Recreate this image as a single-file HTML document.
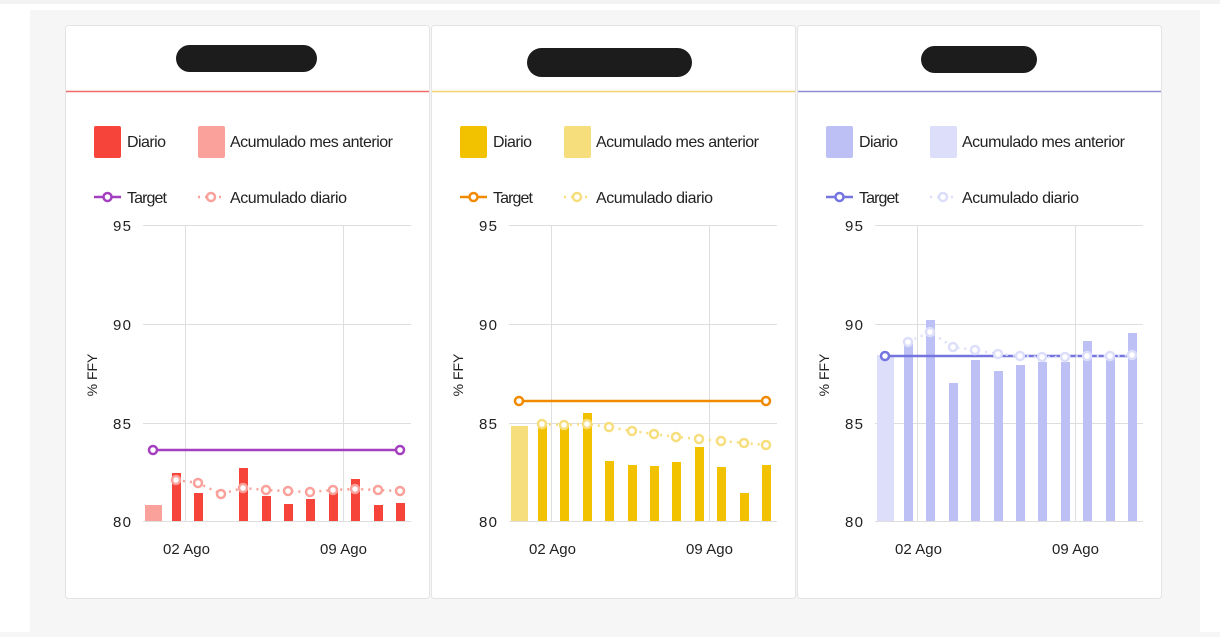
<!DOCTYPE html>
<html><head><meta charset="utf-8"><style>
body{margin:0;width:1220px;height:632px;background:#f6f6f6;font-family:"Liberation Sans",sans-serif;overflow:hidden}
</style></head><body>
<svg width="1220" height="632" xmlns="http://www.w3.org/2000/svg" font-family="Liberation Sans, sans-serif">
<rect x="0" y="0" width="1220" height="632" fill="#ffffff"/>
<rect x="0" y="0" width="1220" height="4" fill="#f3f3f3"/>
<rect x="30" y="10" width="1170" height="622" fill="#f6f6f6"/>
<g stroke="#e4e4e4" fill="#fff">
<rect x="65.5" y="25.5" width="364" height="573" rx="3"/>
<rect x="431.5" y="25.5" width="364" height="573" rx="3"/>
<rect x="797.5" y="25.5" width="364" height="573" rx="3"/>
</g>
<line x1="66" y1="91.5" x2="429" y2="91.5" stroke="#f26b6b" stroke-width="1.5"/>
<line x1="432" y1="91.5" x2="795" y2="91.5" stroke="#f2d46a" stroke-width="1.5"/>
<line x1="798" y1="91.5" x2="1161" y2="91.5" stroke="#8f8fd6" stroke-width="1.5"/>
<rect x="176" y="45" width="141" height="27" rx="13.5" fill="#1c1c1c"/>
<rect x="527" y="48" width="165" height="29" rx="14.5" fill="#1c1c1c"/>
<rect x="921" y="46" width="116" height="27" rx="13.5" fill="#1c1c1c"/>

<defs>
<g id="grid">
<g stroke="#dedede" stroke-width="1">
<line x1="143" y1="225.5" x2="411" y2="225.5"/>
<line x1="143" y1="324.5" x2="411" y2="324.5"/>
<line x1="143" y1="423.5" x2="411" y2="423.5"/>
<line x1="143" y1="521.5" x2="411" y2="521.5"/>
<line x1="185.5" y1="225" x2="185.5" y2="521"/>
<line x1="343.5" y1="225" x2="343.5" y2="521"/>
</g>
<g font-size="15" fill="#222" text-anchor="end">
<text x="131" y="231" textLength="18">95</text><text x="131" y="330" textLength="18">90</text><text x="131" y="429" textLength="18">85</text><text x="131" y="527" textLength="18">80</text>
</g>
<g font-size="15" fill="#222">
<text x="163" y="554" textLength="47">02 Ago</text><text x="320" y="554" textLength="47">09 Ago</text>
</g>
<text transform="translate(97,375) rotate(-90)" font-size="14" fill="#222" text-anchor="middle">% FFY</text>
<g font-size="16" fill="#222">
<text x="127" y="147" textLength="39">Diario</text>
<text x="230" y="147" textLength="163">Acumulado mes anterior</text>
<text x="127" y="203" textLength="40">Target</text>
<text x="230" y="203" textLength="117">Acumulado diario</text>
</g>
</g>
</defs>

<use href="#grid"/>
<use href="#grid" x="366"/>
<use href="#grid" x="732"/>

<!-- Card 1 -->
<rect x="94" y="126" width="27" height="32" rx="2" fill="#f7443a"/>
<rect x="198" y="126" width="27" height="32" rx="2" fill="#f9a19a"/>
<line x1="94" y1="197" x2="121" y2="197" stroke="#a43fc0" stroke-width="2.5"/><circle cx="107.5" cy="197" r="4" fill="#fff" stroke="#a43fc0" stroke-width="2.5"/>
<line x1="198" y1="197" x2="224" y2="197" stroke="#f9a19a" stroke-width="2.5" stroke-dasharray="2,5"/><circle cx="211" cy="197" r="4" fill="#fff" stroke="#f9a19a" stroke-width="2.5"/>
<rect x="145" y="505" width="17" height="16" fill="#f9a19a"/>
<g fill="#f7443a">
<rect x="172" y="473" width="9" height="48"/><rect x="194" y="493" width="9" height="28"/>
<rect x="239" y="468" width="9" height="53"/><rect x="262" y="496" width="9" height="25"/>
<rect x="284" y="504" width="9" height="17"/><rect x="306" y="499" width="9" height="22"/>
<rect x="329" y="491" width="9" height="30"/><rect x="351" y="479" width="9" height="42"/>
<rect x="374" y="505" width="9" height="16"/><rect x="396" y="503" width="9" height="18"/>
</g>
<line x1="153" y1="450" x2="400" y2="450" stroke="#a43fc0" stroke-width="2.5"/>
<circle cx="153" cy="450" r="4" fill="#fff" stroke="#a43fc0" stroke-width="2.5"/><circle cx="400" cy="450" r="4" fill="#fff" stroke="#a43fc0" stroke-width="2.5"/>
<polyline points="176,480 198,483 221,494 243,488 266,490 288,491 310,492 333,490 355,489 378,490 400,491" fill="none" stroke="#f9a19a" stroke-width="2.5" stroke-dasharray="2,5"/>
<g fill="#fff" stroke="#f9a19a" stroke-width="2.5">
<circle cx="176" cy="480" r="4"/><circle cx="198" cy="483" r="4"/><circle cx="221" cy="494" r="4"/><circle cx="243" cy="488" r="4"/><circle cx="266" cy="490" r="4"/><circle cx="288" cy="491" r="4"/><circle cx="310" cy="492" r="4"/><circle cx="333" cy="490" r="4"/><circle cx="355" cy="489" r="4"/><circle cx="378" cy="490" r="4"/><circle cx="400" cy="491" r="4"/>
</g>

<!-- Card 2 -->
<rect x="460" y="126" width="27" height="32" rx="2" fill="#f2c200"/>
<rect x="564" y="126" width="27" height="32" rx="2" fill="#f7de7d"/>
<line x1="460" y1="197" x2="487" y2="197" stroke="#f28a00" stroke-width="2.5"/><circle cx="473.5" cy="197" r="4" fill="#fff" stroke="#f28a00" stroke-width="2.5"/>
<line x1="564" y1="197" x2="590" y2="197" stroke="#f7de7d" stroke-width="2.5" stroke-dasharray="2,5"/><circle cx="577" cy="197" r="4" fill="#fff" stroke="#f7de7d" stroke-width="2.5"/>
<rect x="511" y="426" width="17" height="95" fill="#f7de7d"/>
<g fill="#f2c200">
<rect x="538" y="426" width="9" height="95"/><rect x="560" y="423" width="9" height="98"/>
<rect x="583" y="413" width="9" height="108"/><rect x="605" y="461" width="9" height="60"/>
<rect x="628" y="465" width="9" height="56"/><rect x="650" y="466" width="9" height="55"/>
<rect x="672" y="462" width="9" height="59"/><rect x="695" y="447" width="9" height="74"/>
<rect x="717" y="467" width="9" height="54"/><rect x="740" y="493" width="9" height="28"/>
<rect x="762" y="465" width="9" height="56"/>
</g>
<line x1="519" y1="401" x2="766" y2="401" stroke="#f28a00" stroke-width="2.5"/>
<circle cx="519" cy="401" r="4" fill="#fff" stroke="#f28a00" stroke-width="2.5"/><circle cx="766" cy="401" r="4" fill="#fff" stroke="#f28a00" stroke-width="2.5"/>
<polyline points="542,424 564,425 587,424 609,427 632,431 654,434 676,437 699,439 721,441 744,443 766,445" fill="none" stroke="#f7de7d" stroke-width="2.5" stroke-dasharray="2,5"/>
<g fill="#fff" stroke="#f7de7d" stroke-width="2.5">
<circle cx="542" cy="424" r="4"/><circle cx="564" cy="425" r="4"/><circle cx="587" cy="424" r="4"/><circle cx="609" cy="427" r="4"/><circle cx="632" cy="431" r="4"/><circle cx="654" cy="434" r="4"/><circle cx="676" cy="437" r="4"/><circle cx="699" cy="439" r="4"/><circle cx="721" cy="441" r="4"/><circle cx="744" cy="443" r="4"/><circle cx="766" cy="445" r="4"/>
</g>

<!-- Card 3 -->
<rect x="826" y="126" width="27" height="32" rx="2" fill="#bcc0f5"/>
<rect x="930" y="126" width="27" height="32" rx="2" fill="#dcdefa"/>
<line x1="826" y1="197" x2="853" y2="197" stroke="#7575e0" stroke-width="2.5"/><circle cx="839.5" cy="197" r="4" fill="#fff" stroke="#7575e0" stroke-width="2.5"/>
<line x1="930" y1="197" x2="956" y2="197" stroke="#dcdefa" stroke-width="2.5" stroke-dasharray="2,5"/><circle cx="943" cy="197" r="4" fill="#fff" stroke="#dcdefa" stroke-width="2.5"/>
<rect x="877" y="355" width="17" height="166" fill="#dcdefa"/>
<g fill="#bcc0f5">
<rect x="904" y="343" width="9" height="178"/><rect x="926" y="320" width="9" height="201"/>
<rect x="949" y="383" width="9" height="138"/><rect x="971" y="360" width="9" height="161"/>
<rect x="994" y="371" width="9" height="150"/><rect x="1016" y="365" width="9" height="156"/>
<rect x="1038" y="362" width="9" height="159"/><rect x="1061" y="362" width="9" height="159"/>
<rect x="1083" y="341" width="9" height="180"/><rect x="1106" y="357" width="9" height="164"/>
<rect x="1128" y="333" width="9" height="188"/>
</g>
<line x1="885" y1="356" x2="1132" y2="356" stroke="#7575e0" stroke-width="2.5"/>
<circle cx="885" cy="356" r="4" fill="#fff" stroke="#7575e0" stroke-width="2.5"/>
<polyline points="908,342 930,332 953,347 975,350 998,354 1020,356 1042,357 1065,357 1087,356 1110,356 1132,355" fill="none" stroke="#dcdefa" stroke-width="2.5" stroke-dasharray="2,5"/>
<g fill="#fff" stroke="#dcdefa" stroke-width="2.5">
<circle cx="908" cy="342" r="4"/><circle cx="930" cy="332" r="4"/><circle cx="953" cy="347" r="4"/><circle cx="975" cy="350" r="4"/><circle cx="998" cy="354" r="4"/><circle cx="1020" cy="356" r="4"/><circle cx="1042" cy="357" r="4"/><circle cx="1065" cy="357" r="4"/><circle cx="1087" cy="356" r="4"/><circle cx="1110" cy="356" r="4"/><circle cx="1132" cy="355" r="4"/>
</g>
</svg>
</body></html>
